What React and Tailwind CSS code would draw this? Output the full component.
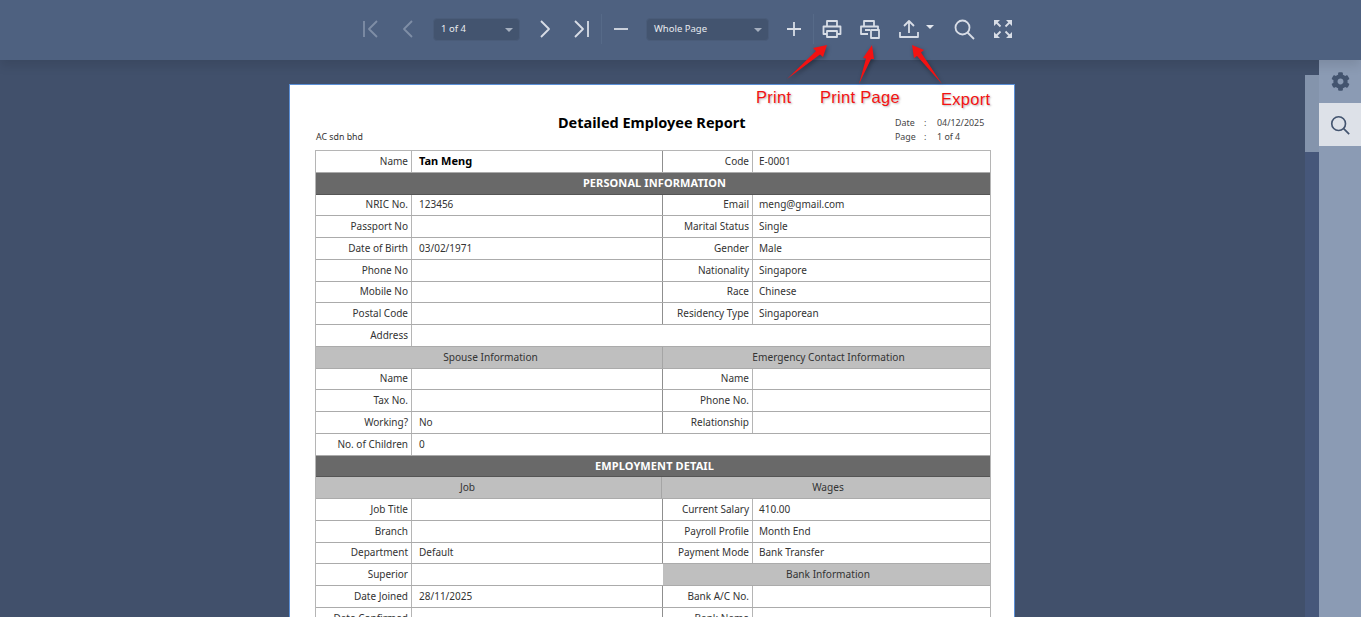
import React from 'react';
import { FaCog } from 'react-icons/fa';

const FONT = "font-['Noto_Sans',Tahoma,sans-serif]";

const ToolBtn = ({ children, className = '' }) => (
  <button className={`flex h-[38px] w-[38px] shrink-0 items-center justify-center ${className}`}>{children}</button>
);

const Icon = ({ children, dim }) => (
  <svg
    width="24"
    height="24"
    viewBox="0 0 24 24"
    fill="none"
    stroke="currentColor"
    strokeWidth="1.8"
    strokeLinejoin="round"
    className={dim ? 'text-[#7f8ea6]' : 'text-[#d8dde6]'}
  >
    {children}
  </svg>
);

const Select = ({ label, className }) => (
  <div className={`ml-[6px] flex h-[23px] shrink-0 items-center justify-between rounded-sm border border-[#4a5c79] bg-[#43546f] pt-px pl-[7px] pr-[6px] text-[9.5px] text-[#e8ebf0] ${className}`}>
    <span>{label}</span>
    <span className="h-0 w-0 border-x-[4px] border-t-[4px] border-x-transparent border-t-[#a5afbf]" />
  </div>
);

const Sep = () => <div className="h-[30px] w-px shrink-0 bg-[#566a88]" />;

const Toolbar = () => (
  <div className="relative z-10 flex h-[60px] shrink-0 items-center bg-[#4e6180] pl-[351px] pb-[2px] shadow-[0_6px_10px_rgba(0,0,0,0.1)]">
    <ToolBtn>
      <Icon dim><path d="M6 4v16M19 4l-8 8 8 8" /></Icon>
    </ToolBtn>
    <ToolBtn>
      <Icon dim><path d="M16 4l-8 8 8 8" /></Icon>
    </ToolBtn>
    <Select label="1 of 4" className="w-[87px]" />
    <ToolBtn className="ml-[6px]">
      <Icon><path d="M8 4l8 8-8 8" /></Icon>
    </ToolBtn>
    <ToolBtn className="-ml-px">
      <Icon><path d="M5 4l8 8-8 8M18 4v16" /></Icon>
    </ToolBtn>
    <Sep />
    <ToolBtn>
      <Icon><path d="M5 12h14" /></Icon>
    </ToolBtn>
    <Select label="Whole Page" className="w-[123px]" />
    <ToolBtn className="ml-[6px]">
      <Icon><path d="M12 5v14M5 12h14" /></Icon>
    </ToolBtn>
    <Sep />
    <ToolBtn className="-ml-px">
      <Icon>
        <path d="M7 9V4h10v5M7 17H3.5V9.5h17V17H17" />
        <path d="M7 14h10v6H7z" />
      </Icon>
    </ToolBtn>
    <ToolBtn>
      <Icon>
        <path d="M6 9V4h10v5M10 17H3V9.5h17V12" />
        <path d="M7 13h5M13 13h8v8h-8z" />
      </Icon>
    </ToolBtn>
    <div className="flex h-[38px] w-[56px] shrink-0 items-center pl-[8px]">
      <Icon><path d="M12 16V4M7 9l5-5 5 5M3 15v5h18v-5" /></Icon>
      <span className="ml-[5px] mb-[4px] h-0 w-0 border-x-[4px] border-t-[4px] border-x-transparent border-t-[#e3e7ee]" />
    </div>
    <ToolBtn>
      <Icon><circle cx="10.5" cy="10.5" r="7" /><path d="M15.5 15.5L22 22" /></Icon>
    </ToolBtn>
    <ToolBtn className="ml-px">
      <Icon>
        <path fill="currentColor" stroke="none" d="M3 3h6L3 9zM21 3v6l-6-6zM3 21v-6l6 6zM21 21h-6l6-6z" />
        <path d="M5 5l4.5 4.5M19 5l-4.5 4.5M5 19l4.5-4.5M19 19l-4.5-4.5" />
      </Icon>
    </ToolBtn>
  </div>
);

const Label = ({ children, className = '' }) => (
  <div className={`flex items-center justify-end border-r border-[#b5b5b5] pr-[3px] text-[#333] ${className}`}>{children}</div>
);

const Val = ({ children, className = '' }) => (
  <div className={`flex items-center text-[#333] ${className}`}>{children}</div>
);

const Row = ({ children }) => <div className="flex h-[21.75px] border-b border-[#ababab]">{children}</div>;

// label/value on both sides
const Pair = ({ a, b, c, d, strong }) => (
  <Row>
    <Label className="w-[96px]">{a}</Label>
    <Val className={`w-[251px] border-r border-[#8f8f8f] pl-[7px] ${strong ? 'text-[11px] font-bold text-black' : ''}`}>{b}</Val>
    <Label className="w-[90px]">{c}</Label>
    <Val className="flex-1 pl-[6px]">{d}</Val>
  </Row>
);

// label/value across the whole table
const Wide = ({ a, b }) => (
  <Row>
    <Label className="w-[96px]">{a}</Label>
    <Val className="flex-1 pl-[7px]">{b}</Val>
  </Row>
);

const Dark = ({ children }) => (
  <div className="flex h-[21.75px] items-center justify-center border-b border-[#555] bg-[#696969] pl-[3px] text-[11px] font-bold tracking-[0.1px] text-white">{children}</div>
);

const Grey = ({ a, b, job }) => (
  <div className="flex h-[21.75px] border-b border-[#ababab] bg-[#bfbfbf] text-[10.15px] text-[#333]">
    <div className={`flex items-center justify-center border-r border-[#a5a5a5] ${job ? 'w-[346px] pr-[42px]' : 'w-[347px] pl-[3px]'}`}>{a}</div>
    <div className="flex flex-1 items-center justify-center pl-[4px]">{b}</div>
  </div>
);

const Report = () => (
  <div className={`w-[726px] border border-[#5b8fd6] bg-white text-[10px] ${FONT}`}>
    <div className="ml-[25px] flex h-[65px] w-[676px]">
      <div className="flex w-[243px] items-end pb-[6px] pl-px text-[8.8px] text-[#333]">AC sdn bhd</div>
      <div className="w-[337px] pt-[27px] text-[14.5px] leading-5 font-bold text-black">Detailed Employee Report</div>
      <div className="grid grid-cols-[29px_13px_1fr] content-start pt-[31px] text-[8.9px] leading-[14px] text-[#444]">
        <span>Date</span><span>:</span><span>04/12/2025</span>
        <span>Page</span><span>:</span><span>1 of 4</span>
      </div>
    </div>
    <div className="ml-[25px] w-[676px] border-x border-t border-[#b5b5b5]">
      <Pair a="Name" b="Tan Meng" c="Code" d="E-0001" strong />
      <Dark>PERSONAL INFORMATION</Dark>
      <Pair a="NRIC No." b="123456" c="Email" d="meng@gmail.com" />
      <Pair a="Passport No" c="Marital Status" d="Single" />
      <Pair a="Date of Birth" b="03/02/1971" c="Gender" d="Male" />
      <Pair a="Phone No" c="Nationality" d="Singapore" />
      <Pair a="Mobile No" c="Race" d="Chinese" />
      <Pair a="Postal Code" c="Residency Type" d="Singaporean" />
      <Wide a="Address" />
      <Grey a="Spouse Information" b="Emergency Contact Information" />
      <Pair a="Name" c="Name" />
      <Pair a="Tax No." c="Phone No." />
      <Pair a="Working?" b="No" c="Relationship" />
      <Wide a="No. of Children" b="0" />
      <Dark>EMPLOYMENT DETAIL</Dark>
      <Grey a="Job" b="Wages" job />
      <Pair a="Job Title" c="Current Salary" d="410.00" />
      <Pair a="Branch" c="Payroll Profile" d="Month End" />
      <Pair a="Department" b="Default" c="Payment Mode" d="Bank Transfer" />
      <Row>
        <Label className="w-[96px]">Superior</Label>
        <Val className="w-[251px]" />
        <div className="flex flex-1 items-center justify-center bg-[#bfbfbf] pl-[3px] text-[10.15px] text-[#333]">Bank Information</div>
      </Row>
      <Pair a="Date Joined" b="28/11/2025" c="Bank A/C No." />
      <Pair a="Date Confirmed" c="Bank Name" />
    </div>
  </div>
);

const CALLOUT = "absolute font-['Liberation_Sans',sans-serif] text-[16.5px] leading-5 tracking-[0.3px] text-[#f31212] [text-shadow:1px_1px_2px_rgba(0,0,0,0.3)]";

// red annotations painted over the screenshot
const Callouts = () => (
  <div className="absolute inset-0 z-20">
    <svg className="pointer-events-none absolute top-0 left-0" width="1361" height="617" fill="#f31212">
      <g style={{ filter: 'drop-shadow(1px 2px 2px rgba(0,0,0,0.35))' }}>
        <path d="M787 79L816 51L813 48L827 45L823 57L820 54.5z" />
        <path d="M859 84L866 58.5L863 58L872 45L874 59L871 59z" />
        <path d="M942 84L917 56L914 58L912 45L924 50L921 52.5z" />
      </g>
    </svg>
    <span className={`${CALLOUT} top-[87px] left-[756px]`}>Print</span>
    <span className={`${CALLOUT} top-[87px] left-[820px]`}>Print Page</span>
    <span className={`${CALLOUT} top-[89px] left-[941px]`}>Export</span>
  </div>
);

export default function App() {
  return (
    <div className={`relative flex h-[617px] w-[1361px] flex-col overflow-hidden bg-[#41506b] ${FONT}`}>
      <Toolbar />
      <div className="flex min-h-0 flex-1">
        <div className="min-w-0 flex-1 overflow-hidden pt-[24px] pl-[289px]">
          <Report />
        </div>
        <div className="flex w-[14px] shrink-0 flex-col">
          <div className="h-[15px]" />
          <div className="h-[77px] bg-[#8494ac]" />
          <div className="flex-1 bg-[#46577a]" />
        </div>
        <div className="w-[42px] shrink-0 bg-[#8b9bb4]">
          <div className="flex h-[43px] items-center justify-center text-[#43546f]">
            <FaCog size={19} />
          </div>
          <div className="flex h-[43px] items-center justify-center bg-[#dde1e8] text-[#43546f]">
            <svg width="22" height="22" viewBox="0 0 24 24" fill="none" stroke="currentColor" strokeWidth="1.8">
              <circle cx="10.5" cy="10.5" r="7.5" />
              <path d="M16 16l6 6" />
            </svg>
          </div>
        </div>
      </div>
      <Callouts />
    </div>
  );
}
